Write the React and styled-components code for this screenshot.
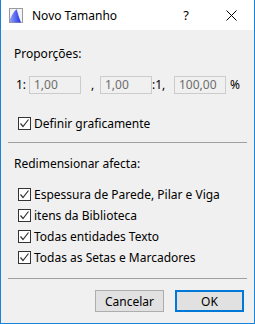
import React from "react";
import styled, { createGlobalStyle } from "styled-components";

const Global = createGlobalStyle`
  html, body { margin: 0; padding: 0; background: #f0f0f0; }
  body { font-family: "Noto Sans", "Open Sans", sans-serif; font-size: 12px; color: #000; }
  * { box-sizing: border-box; }
`;

const Window = styled.div`
  width: 255px;
  height: 324px;
  border: 1px solid #1883d7;
  border-top: none;
  background: #f0f0f0;
  display: flex;
  flex-direction: column;
`;

const TitleBar = styled.div`
  height: 30px;
  background: #fff;
  display: flex;
  align-items: center;
  padding-left: 8px;
`;

const TitleText = styled.span`
  margin-left: 9px;
  font-size: 12px;
  flex: 1;
`;

const TitleButton = styled.div`
  width: ${p => p.$w}px;
  display: flex;
  justify-content: center;
  align-items: center;
  font-size: 13px;
`;

const Body = styled.div`
  flex: 1;
  padding: 0 7px;
  display: flex;
  flex-direction: column;
`;

const SectionLabel = styled.div`
  height: 16px;
  line-height: 16px;
  padding-left: 6px;
  margin-top: ${p => p.$mt}px;
`;

const InputRow = styled.div`
  display: flex;
  align-items: center;
  height: 18px;
  margin-top: 14px;
  padding-left: 8px;
`;

const RowText = styled.span`
  width: ${p => p.$w}px;
  padding-left: ${p => p.$pl || 0}px;
  line-height: 18px;
`;

const Field = styled.div`
  width: 52px;
  height: 18px;
  border: 1px solid #cccccc;
  background: #f0f0f0;
  color: #6d6d6d;
  padding-left: 4px;
  line-height: 16px;
`;

const CheckList = styled.div`
  margin-top: 12px;
  display: flex;
  flex-direction: column;
`;

const CheckRow = styled.div`
  display: flex;
  align-items: center;
  height: ${p => p.$h}px;
  margin-top: ${p => p.$mt || 0}px;
  padding-left: 10px;
`;

const Box = styled.div`
  width: 13px;
  height: 13px;
  border: 1px solid #333;
  background: #fff;
  display: flex;
  align-items: center;
  justify-content: center;
  margin-right: 3px;
`;

const Separator = styled.div`
  height: 1px;
  background: #a0a0a0;
  margin-top: ${p => p.$mt}px;
`;

const Buttons = styled.div`
  display: flex;
  justify-content: flex-end;
  gap: 11px;
  margin-top: 11px;
  padding-right: 3px;
`;

const Button = styled.div`
  width: 69px;
  height: 22px;
  background: #e1e1e1;
  border: ${p => (p.$default ? "2px solid #0078d7" : "1px solid #adadad")};
  display: flex;
  align-items: center;
  justify-content: center;
`;

const Check = ({ label }) => (
  <>
    <Box>
      <svg width="11" height="11" viewBox="0 0 11 11">
        <path d="M1.5 5.5 L4 8.5 L9.5 1.5" fill="none" stroke="#333" strokeWidth="1.2" />
      </svg>
    </Box>
    <span>{label}</span>
  </>
);

const AppIcon = () => (
  <svg width="14" height="15" viewBox="0 0 14 15">
    <defs>
      <linearGradient id="g" x1="0" y1="0" x2="1" y2="0">
        <stop offset="0" stopColor="#8fa0f5" />
        <stop offset="1" stopColor="#1f2ee8" />
      </linearGradient>
    </defs>
    <rect x="0.5" y="0.5" width="13" height="14" fill="#f4f4f4" stroke="#9a9a9a" />
    <path d="M1 14.5 L1 11 C3 7 5 3 8 1 C9 4 10 9 12.5 14.5 Z" fill="url(#g)" />
    <path d="M8 1 C9 4 10 9 12.5 14.5" fill="none" stroke="#fff" strokeWidth="0.8" />
  </svg>
);

export default function App() {
  const items = [
    "Espessura de Parede, Pilar e Viga",
    "itens da Biblioteca",
    "Todas entidades Texto",
    "Todas as Setas e Marcadores",
  ];
  return (
    <>
      <Global />
      <Window>
        <TitleBar>
          <AppIcon />
          <TitleText>Novo Tamanho</TitleText>
          <TitleButton $w={46}>?</TitleButton>
          <TitleButton $w={45}>
            <svg width="11" height="11" viewBox="0 0 11 11">
              <path d="M0.5 0.5 L10.5 10.5 M10.5 0.5 L0.5 10.5" stroke="#000" strokeWidth="1" />
            </svg>
          </TitleButton>
        </TitleBar>
        <Body>
          <SectionLabel $mt={16}>Proporções:</SectionLabel>
          <InputRow>
            <RowText $w={13}>1:</RowText>
            <Field>1,00</Field>
            <RowText $w={19} $pl={10}>,</RowText>
            <Field>1,00</Field>
            <RowText $w={22}>:1,</RowText>
            <Field>100,00</Field>
            <RowText $w={14} $pl={4}>%</RowText>
          </InputRow>
          <CheckRow $h={16} $mt={21}>
            <Check label="Definir graficamente" />
          </CheckRow>
          <Separator $mt={11} />
          <SectionLabel $mt={13}>Redimensionar afecta:</SectionLabel>
          <CheckList>
            {items.map(t => (
              <CheckRow key={t} $h={21}>
                <Check label={t} />
              </CheckRow>
            ))}
          </CheckList>
          <Separator $mt={10} />
          <Buttons>
            <Button>Cancelar</Button>
            <Button $default>OK</Button>
          </Buttons>
        </Body>
      </Window>
    </>
  );
}
